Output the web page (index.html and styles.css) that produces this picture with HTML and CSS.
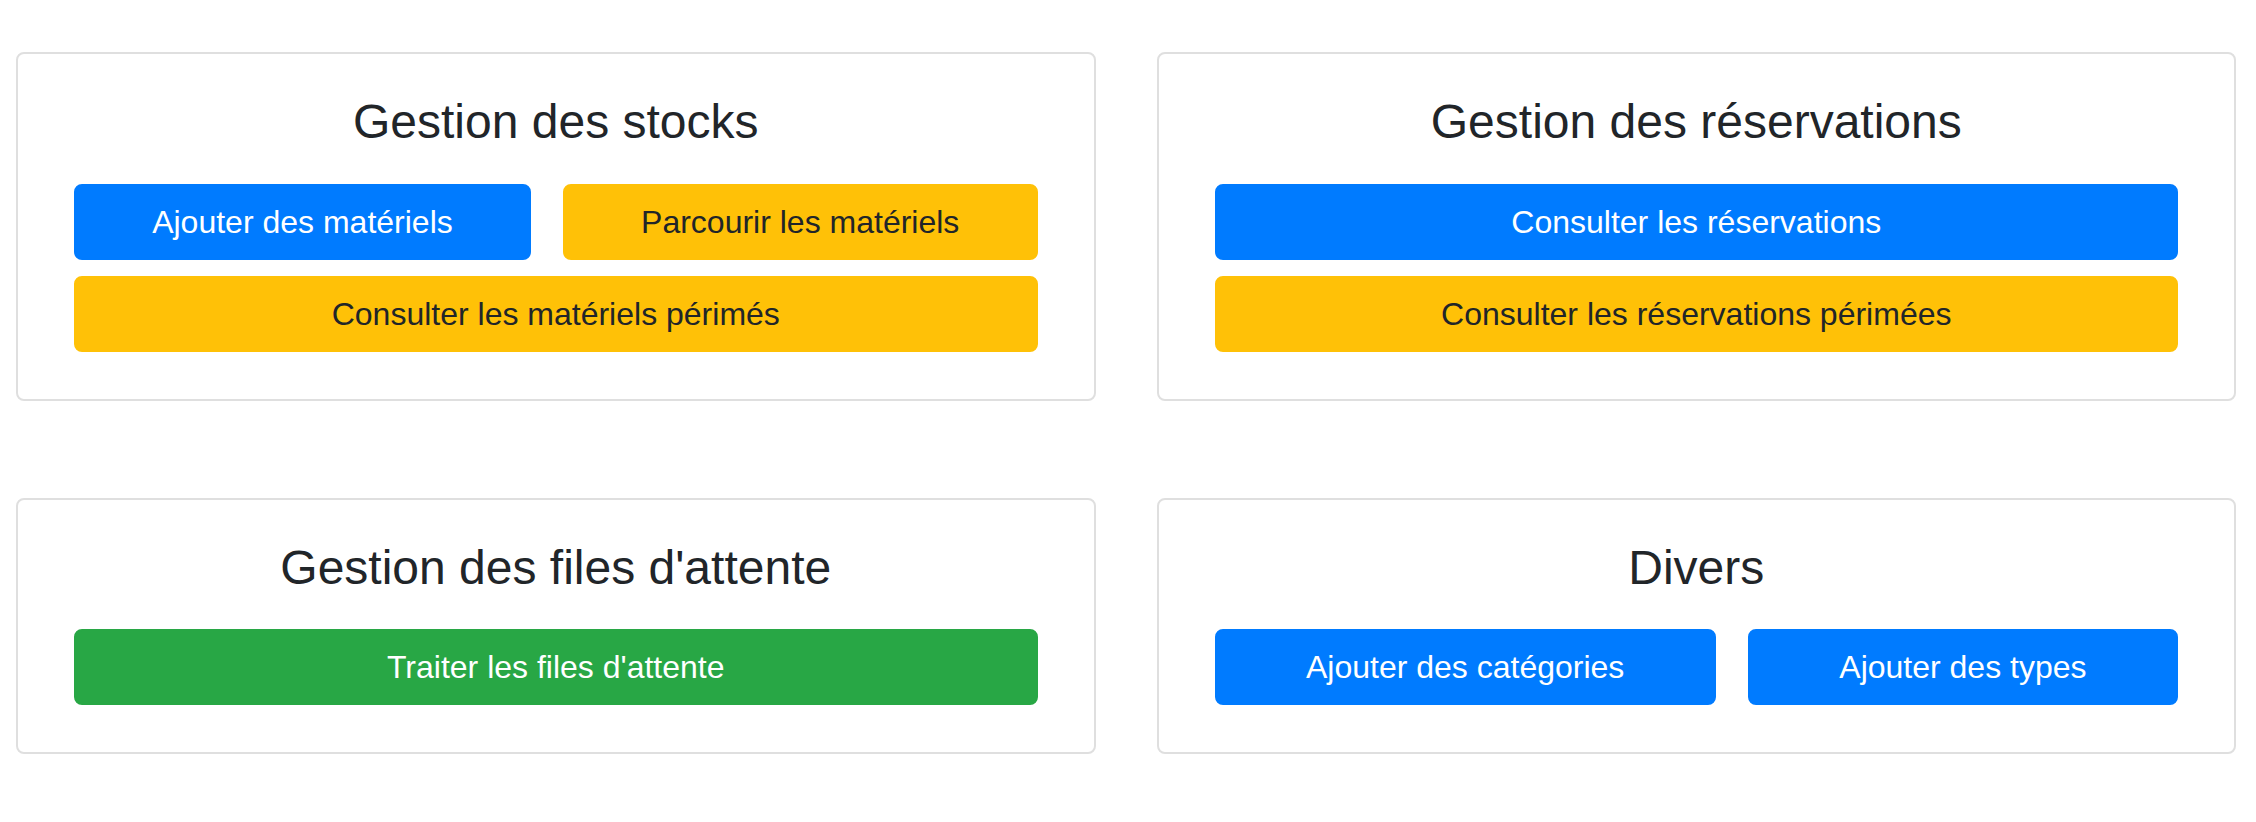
FILE: index.html
```html
<!DOCTYPE html>
<html>
<head>
  <title>Administration</title>
  <link rel="stylesheet" href="styles.css">
</head>
<body>
  <div class="dashboard">

    <div class="card">
      <h2>Gestion des stocks</h2>
      <div class="btn-row">
        <a href="#" class="btn btn-primary">Ajouter des matériels</a>
        <a href="#" class="btn btn-warning">Parcourir les matériels</a>
      </div>
      <div class="btn-row">
        <a href="#" class="btn btn-warning">Consulter les matériels périmés</a>
      </div>
    </div>

    <div class="card">
      <h2>Gestion des réservations</h2>
      <div class="btn-row">
        <a href="#" class="btn btn-primary">Consulter les réservations</a>
      </div>
      <div class="btn-row">
        <a href="#" class="btn btn-warning">Consulter les réservations périmées</a>
      </div>
    </div>

    <div class="card">
      <h2>Gestion des files d'attente</h2>
      <div class="btn-row">
        <a href="#" class="btn btn-success">Traiter les files d'attente</a>
      </div>
    </div>

    <div class="card">
      <h2>Divers</h2>
      <div class="btn-row">
        <a href="#" class="btn btn-primary">Ajouter des catégories</a>
        <a href="#" class="btn btn-primary">Ajouter des types</a>
      </div>
    </div>

  </div>
</body>
</html>
```

FILE: styles.css
```css
body {
  margin: 0;
  font-family: "Liberation Sans", Arial, sans-serif;
  color: #212529;
  background-color: #fff;
}

.dashboard {
  display: grid;
  grid-template-columns: 1fr 1fr;
  column-gap: 61px;
  row-gap: 97px;
  align-items: start;
  padding: 52px 20px 0 16px;
}

.card {
  border: 2px solid #dfdfdf;
  border-radius: 8px;
  padding: 39px 56px 31px 56px;
}

.card h2 {
  margin: 0 0 33px 0;
  font-size: 48px;
  font-weight: 400;
  line-height: 1.2;
  text-align: center;
}

.btn-row {
  display: flex;
  gap: 32px;
  margin-bottom: 16px;
}

.btn {
  flex: 1 1 auto;
  display: block;
  padding: 12px 24px;
  border: 2px solid transparent;
  border-radius: 8px;
  font-size: 32px;
  line-height: 48px;
  text-align: center;
  text-decoration: none;
  white-space: nowrap;
}

.btn-primary {
  background-color: #007bff;
  border-color: #007bff;
  color: #fff;
}

.btn-warning {
  background-color: #ffc107;
  border-color: #ffc107;
  color: #212529;
}

.btn-success {
  background-color: #28a745;
  border-color: #28a745;
  color: #fff;
}
```
